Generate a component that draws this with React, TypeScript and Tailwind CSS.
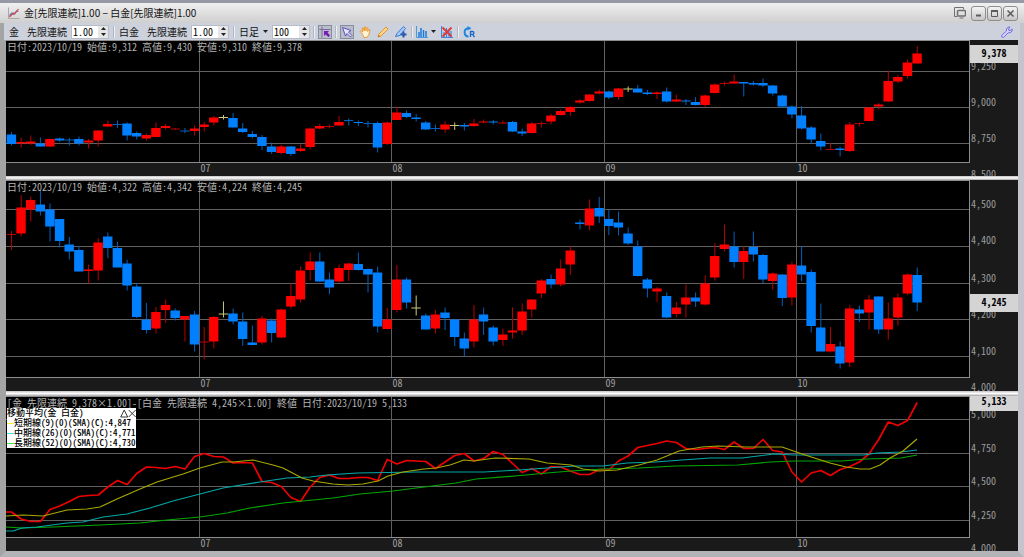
import { useState } from "react";
import { clsx } from "clsx";

type Kind = "u" | "d" | "n";
// [direction, high, body top, body bottom, low] in plot units
type Candle = [Kind, number, number, number, number];

const FIRST_X = 11.5;
const STEP = 9.635;

const goldCandles: Candle[] = [
  ["d", 132, 134.5, 144, 145.5], ["u", 137.5, 142, 143.5, 147.5], ["u", 135.5, 141.5, 143.5, 145],
  ["d", 137.5, 143.5, 146.5, 146.5], ["u", 138.5, 139, 146.5, 147], ["d", 137.5, 138.5, 140.5, 142],
  ["d", 138, 139.5, 140, 145.5], ["d", 136.5, 139, 143.5, 145.5], ["u", 139, 140.5, 142.5, 148.5],
  ["u", 130, 130.5, 140.5, 146.5], ["u", 120.5, 124, 126.5, 127], ["d", 120.5, 124, 124.5, 128],
  ["d", 122.5, 123.5, 135.5, 140.5], ["d", 131.5, 133, 136.5, 139.5], ["u", 133.5, 135, 138.5, 140.5],
  ["u", 122.5, 128, 137, 137.5], ["u", 124, 126, 128, 129.5], ["u", 128, 128.5, 129, 130],
  ["d", 128, 130.5, 131, 133], ["u", 125.5, 128.5, 131, 135.5], ["u", 122, 124.5, 127, 131.5],
  ["u", 116, 117.5, 122.5, 125.5], ["n", 115, 117, 117, 119.5], ["d", 113, 118, 127.5, 127.5],
  ["d", 123, 128.5, 132, 133], ["d", 131, 134, 137, 138.5], ["d", 135, 137, 146, 150],
  ["d", 142.5, 146.5, 152, 154], ["u", 145, 146.5, 153, 154.5], ["d", 146, 146.5, 154, 156],
  ["u", 144, 148.5, 151, 152], ["u", 127.5, 128.5, 147, 149.5], ["u", 124, 126, 128.5, 129.5],
  ["u", 124.5, 126, 126.5, 128.5], ["u", 116, 122, 125.5, 125.5], ["d", 118.5, 120, 120.5, 125.5],
  ["d", 120.5, 122, 123, 126], ["d", 121, 123, 123.5, 127.5], ["d", 121.5, 123, 147.5, 152.5],
  ["u", 121.5, 122.5, 144, 145], ["u", 106.5, 112.5, 120, 120], ["d", 110.5, 113, 117, 118],
  ["d", 114, 117.5, 119, 121.5], ["d", 121, 122.5, 129.5, 130], ["d", 124.5, 128, 128.5, 131.5],
  ["u", 121, 124.5, 129.5, 133], ["n", 122.5, 125, 125, 130], ["d", 123, 125, 126.5, 130.5],
  ["u", 119, 123.5, 126, 127], ["u", 119.5, 121.5, 122.5, 123], ["d", 120, 121.5, 122.5, 124.5],
  ["u", 120.5, 122.5, 123, 124], ["d", 121, 122, 131.5, 132], ["d", 128.5, 131.5, 133.5, 136],
  ["u", 122, 123.5, 133, 133.5], ["u", 121.5, 123, 123.5, 127.5], ["u", 114, 115.5, 121.5, 124.5],
  ["u", 109.5, 111, 115, 115.5], ["u", 106, 107, 112, 116], ["u", 99, 100.5, 102.5, 103.5],
  ["u", 94, 94.5, 101, 101.5], ["u", 89.5, 91.5, 93.5, 94.5], ["d", 90.5, 91.5, 97.5, 99],
  ["u", 88, 88.5, 97, 99.5], ["n", 86.5, 88.5, 88.5, 92], ["d", 85, 88.5, 92.5, 92.5],
  ["d", 90, 92.5, 94, 95], ["u", 91.5, 92.5, 94, 99], ["d", 87.5, 91.5, 101.5, 102.5],
  ["u", 94.5, 99.5, 101.5, 102], ["d", 99, 100.5, 101.5, 105], ["d", 97, 102, 105, 105.5],
  ["u", 94.5, 95.5, 105, 106.5], ["u", 83.5, 84.5, 93, 93.5], ["u", 81.5, 83, 83.5, 85.5],
  ["u", 74.5, 81.5, 83.5, 83.5], ["d", 82, 82, 83.5, 96.5], ["d", 81, 83, 84.5, 85.5],
  ["d", 78.5, 83, 85.5, 87], ["d", 85, 85.5, 93.5, 95.5], ["d", 94.5, 95.5, 106.5, 108],
  ["d", 105.5, 106.5, 114.5, 118.5], ["d", 106, 115.5, 128.5, 129.5], ["d", 126, 127.5, 139.5, 143.5],
  ["d", 133.5, 141, 146.5, 150.5], ["u", 143, 149, 149.5, 150], ["d", 146.5, 148.5, 150, 156.5],
  ["u", 122, 124.5, 151, 152], ["u", 122.5, 123, 123.5, 126.5], ["u", 107.5, 107.5, 121, 121],
  ["u", 103, 104.5, 106.5, 109.5], ["u", 70.5, 81, 101.5, 102], ["u", 75, 77, 81.5, 83],
  ["u", 59.5, 62.5, 76, 78.5], ["u", 46, 53.5, 63.5, 63.5],
];

const platinumCandles: Candle[] = [
  ["u", 231, 234, 234.5, 250], ["u", 195, 207.5, 233.5, 236.5], ["u", 196.5, 200, 209.5, 221.5],
  ["d", 190.5, 204.5, 211.5, 215.5], ["d", 203.5, 209.5, 226.5, 241.5], ["d", 219, 219, 241, 247.5],
  ["d", 237, 244.5, 251.5, 259.5], ["d", 246, 250, 271.5, 271.5], ["u", 264.5, 269.5, 271, 283.5],
  ["u", 238, 242.5, 270.5, 280.5], ["d", 232.5, 236.5, 248, 258], ["d", 242, 248, 267.5, 267.5],
  ["d", 259.5, 263.5, 285.5, 290.5], ["d", 283, 286.5, 317, 318], ["d", 303, 319.5, 330, 333.5],
  ["u", 307, 312, 328.5, 333.5], ["u", 299.5, 305, 310, 323], ["d", 308.5, 310.5, 318, 320.5],
  ["u", 316, 316, 319.5, 341.5], ["d", 311, 314.5, 344.5, 351.5], ["u", 327, 341.5, 342, 359.5],
  ["u", 316, 317, 341.5, 348.5], ["n", 301.5, 313.5, 313.5, 317.5], ["d", 308.5, 313.5, 321.5, 324.5],
  ["d", 312.5, 321.5, 339, 346], ["d", 325.5, 342.5, 345, 345.5], ["u", 316, 318.5, 342.5, 344.5],
  ["d", 318.5, 320.5, 333, 342.5], ["u", 308.5, 309.5, 337.5, 338], ["u", 283.5, 296, 306.5, 308.5],
  ["u", 266.5, 270.5, 299.5, 302.5], ["u", 252.5, 261.5, 270, 280.5], ["d", 252.5, 261.5, 281.5, 282],
  ["d", 272.5, 279.5, 287.5, 294], ["u", 264.5, 268, 281.5, 282.5], ["u", 262.5, 263.5, 270, 281],
  ["d", 252.5, 264, 270, 270.5], ["d", 268.5, 269, 274.5, 292.5], ["d", 266.5, 272.5, 326.5, 332.5],
  ["u", 308, 319.5, 329, 329.5], ["u", 265, 279.5, 310, 312.5], ["d", 277.5, 279.5, 302.5, 308.5],
  ["n", 295.5, 307.5, 307.5, 315.5], ["d", 313.5, 315.5, 329.5, 329.5], ["u", 310, 314.5, 328.5, 333.5],
  ["d", 307.5, 312.5, 318, 330], ["d", 319.5, 319.5, 337, 346], ["d", 332.5, 338.5, 348.5, 356],
  ["u", 305, 319.5, 341.5, 347.5], ["d", 307.5, 314.5, 321.5, 335], ["d", 325.5, 327.5, 341.5, 345.5],
  ["u", 328.5, 334.5, 340, 346], ["u", 307.5, 330.5, 332.5, 338.5], ["u", 303.5, 311.5, 330.5, 335],
  ["u", 299.5, 299.5, 309.5, 317.5], ["u", 279, 280.5, 293.5, 298], ["d", 274.5, 279, 284.5, 288.5],
  ["u", 259.5, 268.5, 284.5, 286.5], ["u", 246.5, 250.5, 264.5, 275], ["d", 219.5, 222.5, 224, 229.5],
  ["u", 199.5, 208.5, 225.5, 230.5], ["d", 197, 208, 216.5, 223], ["d", 210, 219, 226, 235],
  ["d", 211.5, 222.5, 227.5, 235.5], ["d", 227.5, 233.5, 243.5, 245], ["d", 240.5, 246.5, 276, 276.5],
  ["d", 278, 279.5, 288.5, 297.5], ["u", 287, 288.5, 291.5, 302], ["d", 292.5, 296, 317.5, 318],
  ["u", 302, 307.5, 314, 317], ["u", 284.5, 297.5, 304.5, 317.5], ["d", 292.5, 297.5, 301.5, 307],
  ["u", 275.5, 283.5, 304.5, 305.5], ["u", 243, 256, 277.5, 280.5], ["u", 224.5, 244.5, 249, 251.5],
  ["d", 231.5, 246.5, 262, 267.5], ["u", 246.5, 251, 262, 279], ["d", 231.5, 247, 254.5, 261.5],
  ["d", 254, 255, 279.5, 283], ["u", 272.5, 273.5, 281, 289.5], ["d", 274.5, 274.5, 298, 306],
  ["u", 261.5, 264.5, 297.5, 305.5], ["d", 246, 265.5, 274.5, 281], ["d", 269.5, 272, 326, 332.5],
  ["d", 303.5, 327.5, 351.5, 351.5], ["u", 327, 344, 351.5, 352.5], ["d", 341.5, 346.5, 363.5, 368.5],
  ["u", 305, 308.5, 362.5, 367], ["d", 305.5, 309.5, 313.5, 322], ["u", 295, 299.5, 312.5, 329.5],
  ["d", 296.5, 296.5, 329.5, 334], ["u", 302.5, 318.5, 329.5, 339.5], ["u", 293.5, 297.5, 317.5, 325.5],
  ["u", 273.5, 274.5, 293.5, 295], ["d", 267.5, 275, 302.5, 311],
];

const spread = [
  512, 519, 521.5, 521.5, 509.5, 506, 501.5, 496.5, 495.5, 495, 487, 480.5, 484.5, 473.5, 467, 467.5,
  468.5, 466.5, 469, 456.5, 453.5, 456.5, 457, 463, 462.5, 463, 481.5, 482.5, 486.5, 497.5, 501.5, 487,
  477.5, 475, 478.5, 478.5, 477.5, 477.5, 480.5, 459.5, 464, 460.5, 461, 461.5, 468.5, 462, 455.5,
  453.5, 461, 458.5, 451.5, 454.5, 463.5, 472.5, 468.5, 474, 466.5, 467, 471, 474.5, 474.5, 469.5, 470,
  461, 456, 447.5, 445.5, 443.5, 441, 442.5, 448.5, 449.5, 448.5, 447.5, 449.5, 442, 448.5, 448.5,
  439.5, 450.5, 452, 472, 482, 473, 470.5, 475.5, 469.5, 466.5, 462, 454, 439.5, 422, 425.5, 420.5, 402.5,
];

const spreadPoints =
  "6,512 " + spread.map((y, i) => `${FIRST_X + i * STEP},${y}`).join(" ");

const shortSma =
  "6,516 23,515 43,516 67,510 87,509 100,507 117,499 140,489 157,482 183,474 200,468 222,462 233,462 253,460 273,465 283,468 302,478 313,481 333,484 348,485 363,484 378,481 388,476 403,472 424,469 436,468 450,465 464,460 474,461 495,458 529,459 547,463 571,465 583,469 599,471 617,470 639,465 657,460 679,451 702,447 718,446 746,447 782,447 802,454 830,463 846,467 860,469 870,469 880,465 890,458 903,451 917,439";
const midSma =
  "6,531 13,531 22,528 37,527 67,523 83,522 103,517 127,514 150,508 173,501 200,494 223,488 260,482 287,478 310,477 327,475 357,473 417,472 444,472 484,472 519,470 547,468 575,466 603,466 627,463 655,462 682,460 710,458 742,458 774,454 794,455 818,455 864,455 877,453 901,452 917,450";
const longSma =
  "6,527 22,528 53,527 100,525 140,523 167,520 200,517 227,513 250,508 283,503 303,501 333,498 360,494 393,491 424,487 456,483 476,479 515,476 547,473 571,471 603,469 639,468 675,466 738,465 770,462 794,461 842,461 866,459 901,458 917,455";

const months = [
  { label: "07", x: 199.5 },
  { label: "08", x: 391.5 },
  { label: "09", x: 604.5 },
  { label: "10", x: 796.5 },
];

const gothic = "font-['Noto_Sans_CJK_JP',sans-serif] [font-feature-settings:'hwid']";

const bodyFill = { u: "#ff0000", d: "#0080ff", n: "#c8c878" };
const wickFill = { u: "#b80000", d: "#0060c0", n: "#c8c878" };

function Candles({ data }: { data: Candle[] }) {
  return (
    <g>
      {data.map(([kind, high, top, bottom, low], i) => {
        const x = FIRST_X + i * STEP;
        const thin = bottom - top < 1;
        return (
          <g key={i}>
            <rect x={x - 0.5} y={high} width={1} height={low - high} fill={wickFill[kind]} />
            <rect
              x={x - 4.8}
              y={top}
              width={9.4}
              height={Math.max(bottom - top, 1)}
              fill={thin ? wickFill[kind] : bodyFill[kind]}
            />
          </g>
        );
      })}
    </g>
  );
}

type PanelProps = {
  title: string;
  top: number;
  height: number;
  grid: { label: string; y: number }[];
  last: { label: string; y: number };
  className: string;
  overlay?: React.ReactNode;
  children: React.ReactNode;
};

function Panel({ title, top, height, grid, last, className, overlay, children }: PanelProps) {
  const pct = (y: number) => `${((y - top) / height) * 100}%`;
  return (
    <section className={clsx("grid min-h-0 grid-cols-[1fr_48px] overflow-hidden bg-[#1a1a1a]", className)}>
      <div className="flex min-h-0 min-w-0 flex-col">
        <div className="relative min-h-0 flex-1 border-y border-r border-[#8c8c8c] bg-black">
          <svg
            className="absolute inset-0 h-full w-full"
            viewBox={`6 ${top} 963 ${height}`}
            preserveAspectRatio="none"
            role="img"
            aria-label={title}
          >
            <g stroke="#606060" strokeWidth="1" shapeRendering="crispEdges">
              {grid.map((g) => (
                <line key={g.label} x1="6" x2="969" y1={g.y} y2={g.y} />
              ))}
              {months.map((m) => (
                <line key={m.label} x1={m.x} x2={m.x} y1={top} y2={top + height} />
              ))}
            </g>
            {children}
          </svg>
          <h2 className="relative pl-px text-[10px] leading-[11px] whitespace-nowrap text-[#b4b4b4]">
            {title}
          </h2>
          {overlay}
        </div>
        <div className="relative h-[13px] shrink-0 text-[10px] leading-[10px] text-[#a0a0a0]">
          {months.map((m) => (
            <span
              key={m.label}
              className="absolute top-0"
              style={{ left: `${((m.x - 5) / 964) * 100}%` }}
            >
              {m.label}
            </span>
          ))}
        </div>
      </div>
      <div className="min-h-0 pt-px pb-[14px]">
        <div className="relative h-full text-[10px] leading-[12px] text-[#9c9c9c]">
          {grid.map((g) => (
            <span key={g.label} className="absolute left-px -translate-y-full" style={{ top: pct(g.y) }}>
              {g.label}
            </span>
          ))}
          <b
            className="absolute left-0 h-[18px] w-full -translate-y-1/2 bg-[#d4d4d4] text-center leading-[16px] text-black"
            style={{ top: pct(last.y) }}
          >
            {last.label}
          </b>
        </div>
      </div>
    </section>
  );
}

type SpinnerProps = { id: string; label?: string; initial: number; step: number; digits: number };

function Spinner({ id, label, initial, step, digits }: SpinnerProps) {
  const [value, setValue] = useState(initial.toFixed(digits));
  const bump = (by: number) => setValue((Number(value) + by).toFixed(digits));
  return (
    <div className="flex h-[14px] w-[38px] border border-[#b8bcc6] bg-white">
      <input
        id={id}
        aria-label={label}
        className="w-[26px] min-w-0 bg-white pl-px text-[10px] leading-[12px] text-black outline-none"
        value={value}
        onChange={(e) => setValue(e.target.value)}
      />
      <div className="flex flex-1 flex-col bg-[#e6e6e8]">
        <button className="flex flex-1 items-center justify-center" aria-label="増やす" onClick={() => bump(step)}>
          <svg viewBox="0 0 5 3" className="h-[3px] w-[5px]">
            <path d="M0 3 2.5 0 5 3z" fill="#222" />
          </svg>
        </button>
        <button className="flex flex-1 items-center justify-center" aria-label="減らす" onClick={() => bump(-step)}>
          <svg viewBox="0 0 5 3" className="h-[3px] w-[5px]">
            <path d="M0 0 2.5 3 5 0z" fill="#222" />
          </svg>
        </button>
      </div>
    </div>
  );
}

const Divider = ({ tight }: { tight?: boolean }) => (
  <div className={clsx("h-3 w-[2px] border-l border-[#b4b8c2] bg-[#eceef4]", tight ? "mx-[3px]" : "mx-1")} />
);

function Tool({ label, pressed, children }: { label: string; pressed?: boolean; children: React.ReactNode }) {
  return (
    <button
      aria-label={label}
      className={clsx(
        "flex h-[14px] w-[14px] items-center justify-center",
        pressed && "border border-[#8a8e9a] bg-[#b8bccb]"
      )}
    >
      <svg viewBox="0 0 12 12" className="h-3 w-3 shrink-0" fill="none">
        {children}
      </svg>
    </button>
  );
}

const Caret = () => (
  <svg viewBox="0 0 5 3" className="h-[3px] w-[5px]">
    <path d="M0 0h5L2.5 3z" fill="#222" />
  </svg>
);

function WindowButton({ label, children }: { label: string; children: React.ReactNode }) {
  return (
    <button
      aria-label={label}
      className="flex h-[15px] w-[15px] items-center justify-center rounded-[3px] border border-[#8e8e8e] bg-linear-to-b from-[#f4f4f4] to-[#c6c6c6]"
    >
      <svg viewBox="0 0 9 9" className="h-[9px] w-[9px]" fill="none" stroke="#5c5c5c">
        {children}
      </svg>
    </button>
  );
}

function TitleBar() {
  return (
    <header className="flex h-[23px] items-center border-t-[3px] border-[#9499a4] bg-linear-to-b from-[#f0f0f0] to-[#cfcfcf] pr-[6px] pl-2">
      <svg viewBox="0 0 12 12" className="h-3 w-3" fill="none">
        <path d="M.5.5v11h11" stroke="#a8a8a8" />
        <path d="M1.500 8.500 4 6l2 1.500L8.500 4l2 .5" stroke="#4a7ac8" strokeWidth="1.200" />
        <path d="M1.500 10 4 7.500 5.500 6 7 6.500 10.500 2" stroke="#e04848" strokeWidth="1.200" />
      </svg>
      <h1 className="ml-1 flex-1 text-[10px] leading-[14px] text-[#111] [font-feature-settings:'palt']">
        金[先限連続]1.00 − 白金[先限連続]1.00
      </h1>
      <button aria-label="切り離す" className="mr-[5px]">
        <svg viewBox="0 0 12 12" className="h-3 w-3" fill="none" stroke="#707070">
          <path d="M3.500 9.500h-3v-9h9v2" />
          <rect x="3.500" y="3.500" width="8" height="5.500" rx="1" strokeWidth="1.500" />
          <path d="M5.500 11h4" />
        </svg>
      </button>
      <div className="flex gap-px">
        <WindowButton label="最小化">
          <path d="M2 6.500h5" strokeWidth="2" />
        </WindowButton>
        <WindowButton label="最大化">
          <path d="M1.500 2h6v5.500h-6z" />
          <path d="M1 2h7" strokeWidth="2" />
        </WindowButton>
        <WindowButton label="閉じる">
          <path d="m1.500 1.500 6 6m0-6-6 6" strokeWidth="1.600" />
        </WindowButton>
      </div>
    </header>
  );
}

function ToolBar() {
  return (
    <div className="flex h-[17px] items-center bg-[#cdd1dc] pr-[6px] pl-[5px] text-[10px] leading-[14px] text-[#111]">
      <label htmlFor="gold" className="flex gap-2">
        <span>金</span>
        <span>先限連続</span>
      </label>
      <div className="ml-1">
        <Spinner id="gold" initial={1} step={0.01} digits={2} />
      </div>
      <Divider />
      <label htmlFor="platinum" className="flex gap-2">
        <span>白金</span>
        <span>先限連続</span>
      </label>
      <div className="ml-1">
        <Spinner id="platinum" initial={1} step={0.01} digits={2} />
      </div>
      <Divider />
      <button className="flex items-center gap-1">
        日足
        <Caret />
      </button>
      <div className="ml-1">
        <Spinner id="bars" label="本数" initial={100} step={1} digits={0} />
      </div>
      <Divider tight />
      <Tool label="十字カーソル" pressed>
        <path d="M3 .5v11M.5 3.500h11" stroke="#7d6a9c" />
        <path d="M5 5h5L8.500 6.500 11 9.500 9.500 11 6.500 8.500 5 10z" fill="#7a1ab0" />
      </Tool>
      <Divider tight />
      <div className="flex gap-1">
        <Tool label="選択" pressed>
          <path d="M1.500 1.500 10 4.500 7.500 6l3.500 3.500-1.500 1.500L6 7.500 4.500 10z" fill="#e8e6ff" stroke="#5a50b4" />
        </Tool>
        <Tool label="手のひら">
          <path
            d="M3.500 8 1 5.500l1-.8 1.800 1.300L3.200 2l1-.3L5.300 5V1l1.200-.2.4 4L8 1.500l1 .3-.4 3.700 1.500-2 .9.5-1.200 4.500-1.800 3H5z"
            fill="#fff3d8"
            stroke="#e89428"
            strokeWidth=".9"
          />
        </Tool>
        <Tool label="鉛筆">
          <path d="M1 11 2 8l7-7 2 2-7 7z" fill="#ffd890" stroke="#e8902c" />
          <path d="m1 11 .7-2 1.300 1.300z" fill="#b06010" />
        </Tool>
        <Tool label="ペン追加">
          <path d="m.5 10.500 1.500-3 6.500-7 2 2-5.500 7z" fill="#a8c8ff" stroke="#3c78d0" />
          <path d="M8.500 5.500v6m-3-3h6" stroke="#2858a8" strokeWidth="2" />
        </Tool>
      </div>
      <Divider tight />
      <button aria-label="指標" className="flex items-center gap-[3px]">
        <svg viewBox="0 0 12 12" className="h-3 w-3" fill="none">
          <path d="M.5 0v11.500H12" stroke="#4898e0" />
          <path d="M3 6v5m2-9v9m2.500-7v7M10 5v6" stroke="#1c78d8" strokeWidth="1.500" />
        </svg>
        <Caret />
      </button>
      <div className="ml-1">
        <Tool label="指標を削除">
          <path d="M.5 0v11.500H12M3 6v5m2.500-9v9M8 4v7m2-6v6" stroke="#3c88e0" strokeWidth="1.200" />
          <path d="m1.500 1.500 9 9m0-9-9 9" stroke="#e03838" strokeWidth="1.800" />
        </Tool>
      </div>
      <Divider tight />
      <Tool label="更新">
        <path d="M5 2.200A4.200 4.200 0 0 0 5.500 10.500" stroke="#1c88e0" strokeWidth="2" />
        <path d="M4.500 0 8.500 2.200 4.500 4.600z" fill="#1c88e0" />
        <path d="M7.500 11V5.500h2a1.400 1.400 0 0 1 0 2.800h-2m2 0L11.500 11" stroke="#1a68c8" strokeWidth="1.300" />
      </Tool>
      <div className="ml-auto">
        <Tool label="設定">
          <path
            d="M1 11 .5 9.500 5.500 5C5 2.500 6.500.8 9 1L7.500 3l.3 1.300 1.400.3L11.200 3c.4 2.500-1.500 4.300-4 3.800L2.500 11.500z"
            fill="#d8d4ff"
            stroke="#6c5ce0"
            strokeWidth=".9"
          />
        </Tool>
      </div>
    </div>
  );
}

const legendRows = [
  { name: "短期線(9)(0)(SMA)(C):4,847", line: "bg-[#f0f040]" },
  { name: "中期線(26)(0)(SMA)(C):4,771", line: "bg-[#40e0f0]" },
  { name: "長期線(52)(0)(SMA)(C):4,730", line: "bg-[#40e840]" },
];

function Legend() {
  return (
    <div className="absolute top-[11px] left-px w-[129px] bg-white text-[9px] leading-[10px] font-medium whitespace-nowrap text-black">
      <div className="flex h-[10px] items-center justify-between">
        移動平均(金 白金)
        <svg viewBox="0 0 16 9" className="h-[9px] w-4" fill="none" stroke="#222" strokeWidth=".9">
          <path d="M.7 8 4.200 1l3.500 7zM8.700 1l7 7m0-7-7 7" />
        </svg>
      </div>
      <ul>
        {legendRows.map((row) => (
          <li key={row.name} className="flex h-[10px] items-center">
            <i className={clsx("h-px w-[7px] shrink-0", row.line)} />
            {row.name}
          </li>
        ))}
      </ul>
    </div>
  );
}

const Splitter = ({ className }: { className: string }) => (
  <div className={clsx("shrink-0 cursor-row-resize bg-linear-to-b from-[#c4c0c4] via-white to-[#a8a4a8]", className)} />
);

export default function App() {
  return (
    <div
      className={clsx(
        "flex h-screen min-h-[400px] flex-col border-r-[6px] border-b-[6px] border-l-[6px] border-r-[#c4c4cc] border-b-[#b4b4b8] border-l-[#a4a4a4]",
        gothic
      )}
    >
      <div className="-mx-[6px] shrink-0">
        <TitleBar />
        <div className="mx-[4px]">
          <ToolBar />
        </div>
      </div>
      <Panel
        className="flex-[136_1_0%]"
        title="日付:2023/10/19 始値:9,312 高値:9,430 安値:9,310 終値:9,378"
        top={41}
        height={121}
        grid={[
          { label: "9,250", y: 71.5 },
          { label: "9,000", y: 107.5 },
          { label: "8,750", y: 143.5 },
          { label: "8,500", y: 180 },
        ]}
        last={{ label: "9,378", y: 54 }}
      >
        <Candles data={goldCandles} />
      </Panel>
      <Splitter className="h-1" />
      <Panel
        className="flex-[211_1_0%]"
        title="日付:2023/10/19 始値:4,322 高値:4,342 安値:4,224 終値:4,245"
        top={181}
        height={196}
        grid={[
          { label: "4,500", y: 209.5 },
          { label: "4,400", y: 246.5 },
          { label: "4,300", y: 283.5 },
          { label: "4,200", y: 319.5 },
          { label: "4,100", y: 356.5 },
          { label: "4,000", y: 393 },
        ]}
        last={{ label: "4,245", y: 303 }}
      >
        <Candles data={platinumCandles} />
      </Panel>
      <Splitter className="h-[5px]" />
      <Panel
        className="flex-[155_1_0%]"
        title="[金 先限連続 9,378×1.00]－[白金 先限連続 4,245×1.00] 終値 日付:2023/10/19 5,133"
        top={397}
        height={140}
        grid={[
          { label: "5,000", y: 419.5 },
          { label: "4,750", y: 453.5 },
          { label: "4,500", y: 486.5 },
          { label: "4,250", y: 520.5 },
          { label: "4,000", y: 554 },
        ]}
        last={{ label: "5,133", y: 402 }}
        overlay={<Legend />}
      >
        <g fill="none" strokeLinejoin="round">
          <polyline points={spreadPoints} stroke="#f00000" strokeWidth="1.700" />
          <polyline points={longSma} stroke="#00a800" strokeWidth="1.200" />
          <polyline points={midSma} stroke="#00a8a8" strokeWidth="1.200" />
          <polyline points={shortSma} stroke="#a8a800" strokeWidth="1.200" />
        </g>
      </Panel>
    </div>
  );
}
